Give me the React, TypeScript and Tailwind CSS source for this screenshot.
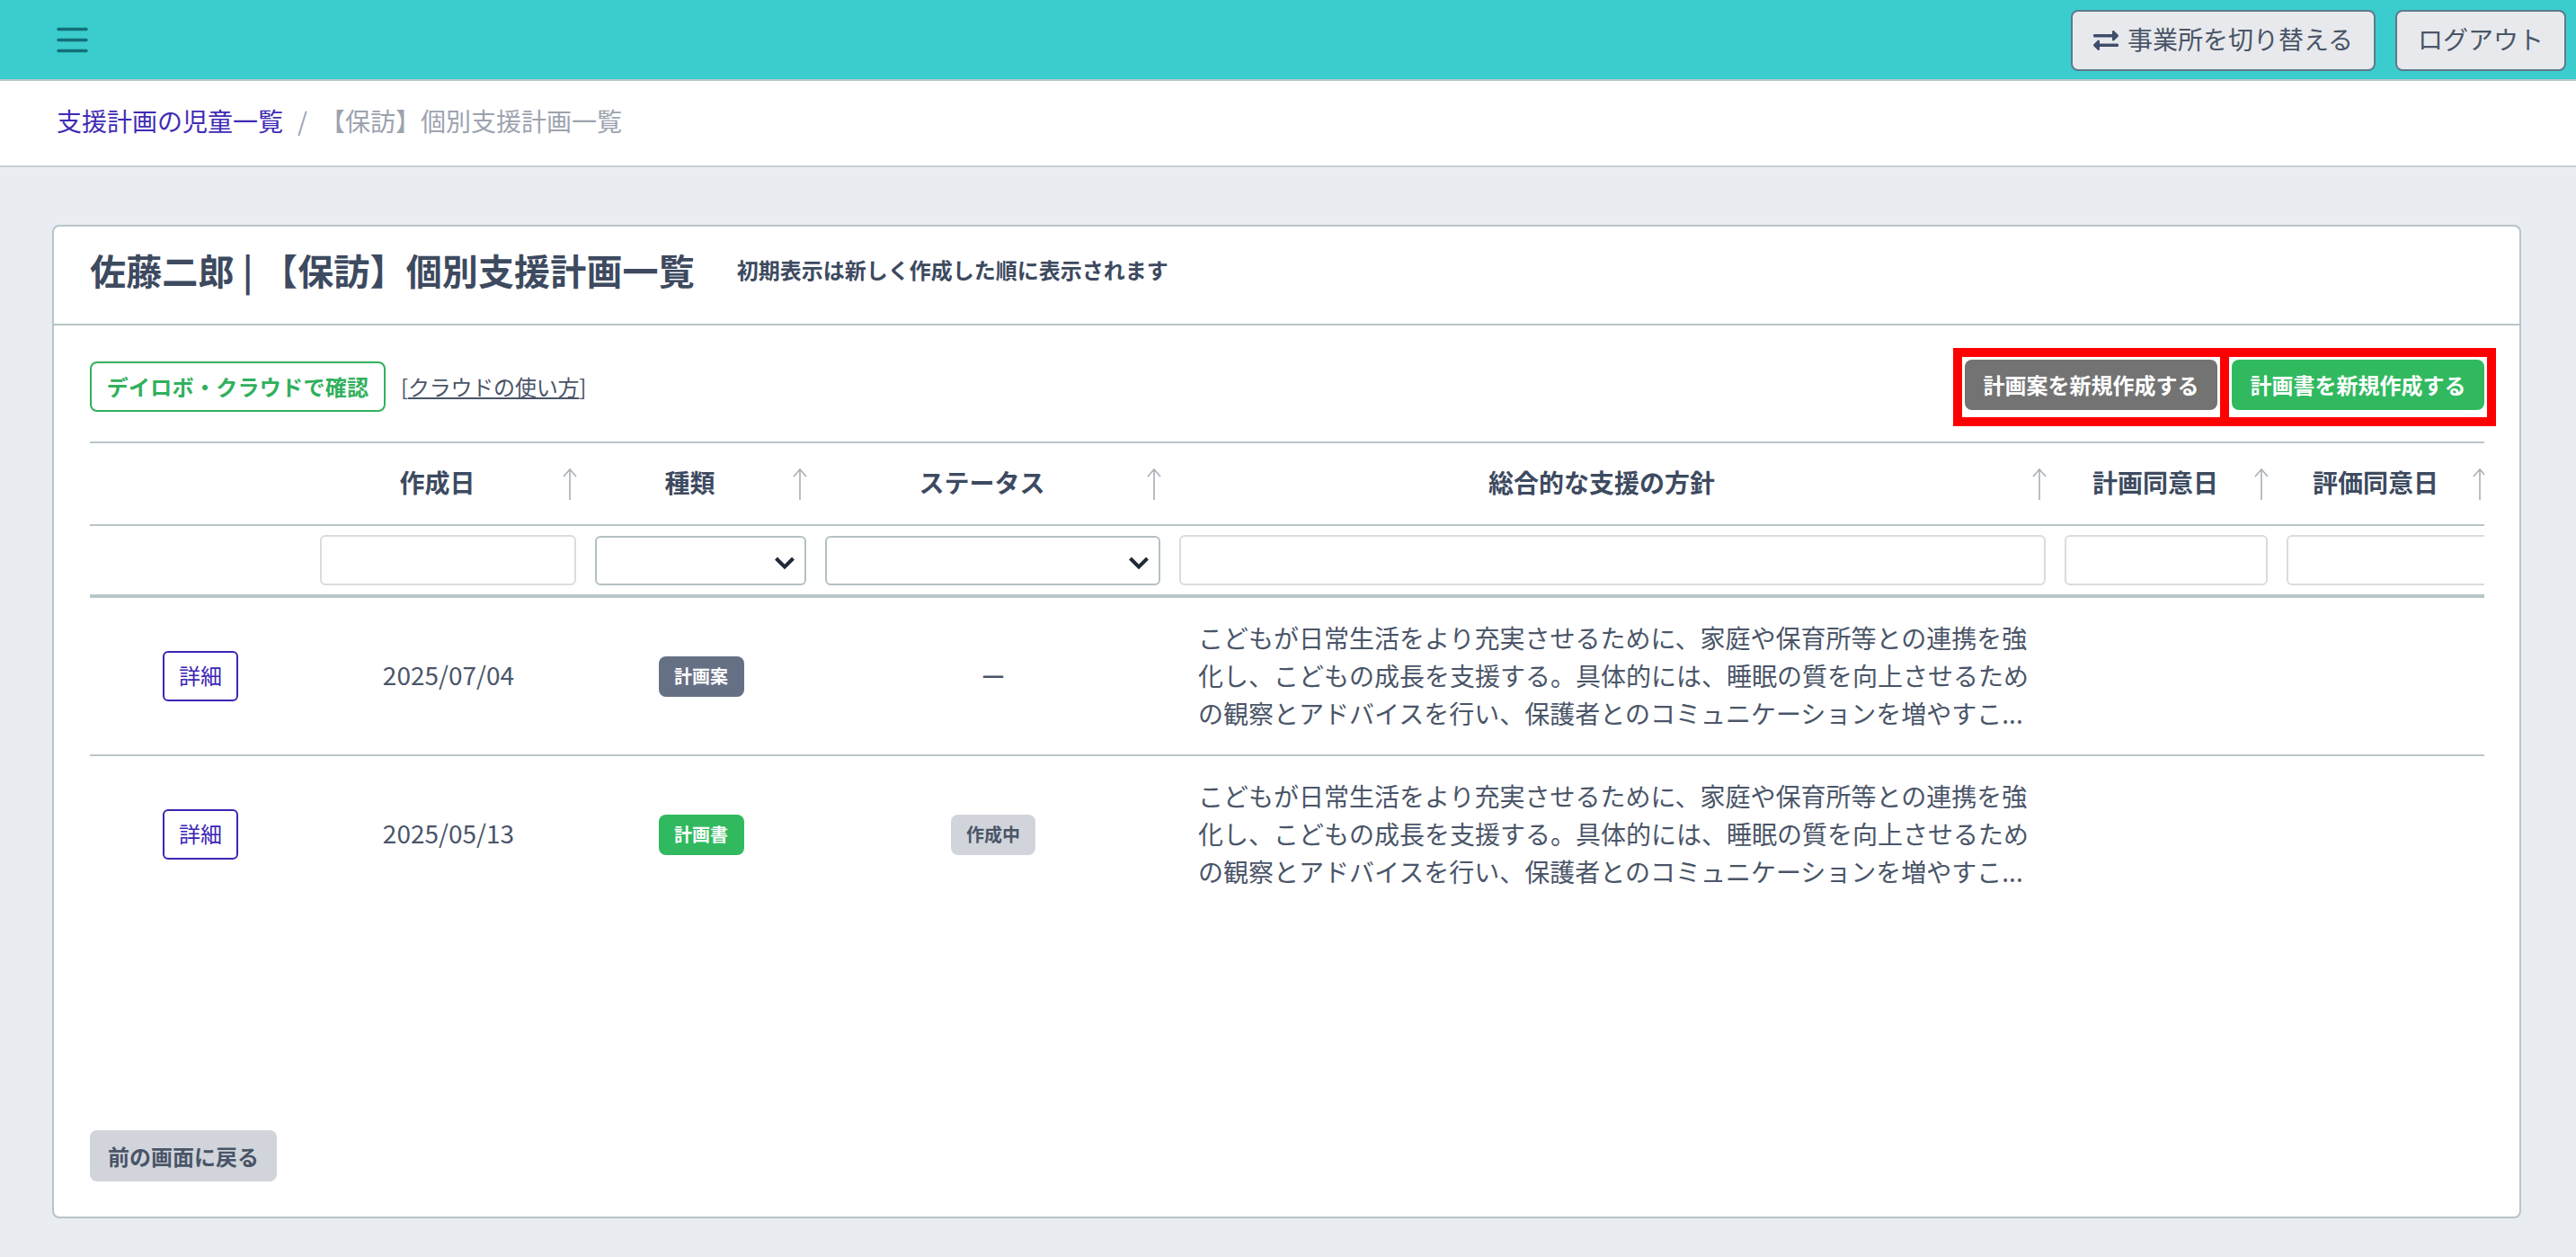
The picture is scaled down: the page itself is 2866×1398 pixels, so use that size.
import { FaExchangeAlt } from "react-icons/fa";

const FONT = "font-['Noto_Sans_CJK_JP',sans-serif]";

const SUMMARY =
  "こどもが日常生活をより充実させるために、家庭や保育所等との連携を強化し、こどもの成長を支援する。具体的には、睡眠の質を向上させるための観察とアドバイスを行い、保護者とのコミュニケーションを増やすこ...";

const HEADERS = ["作成日", "種類", "ステータス", "総合的な支援の方針", "計画同意日", "評価同意日"];

function SortArrow() {
  return (
    <svg
      className="absolute right-[9px] top-[28px]"
      width="18"
      height="35"
      viewBox="0 0 18 35"
      fill="none"
      stroke="#a9afb6"
      strokeWidth="1.6"
    >
      <path d="M9 1V35M2 9L9 1L16 9" />
    </svg>
  );
}

function SelectBox() {
  return (
    <div className="relative">
      <select className="block h-[55px] w-full appearance-none rounded-md border-2 border-[#b4c0c4] bg-white" />
      <svg
        className="pointer-events-none absolute right-[12px] top-[22px]"
        width="24"
        height="16"
        viewBox="0 0 24 16"
        fill="none"
        stroke="#1f2937"
        strokeWidth="4"
      >
        <path d="M2.5 3L12 12.5L21.5 3" />
      </svg>
    </div>
  );
}

function TextBox() {
  return <input className="block h-[56px] w-full rounded-md border-2 border-[#d9dcdf] bg-white" />;
}

function Row({
  date,
  kind,
  kindColor,
  status,
  last,
}: {
  date: string;
  kind: string;
  kindColor: string;
  status: React.ReactNode;
  last?: boolean;
}) {
  const cell = `align-middle text-center ${last ? "" : "border-b-2 border-[#b8c6c9]"}`;
  return (
    <tr>
      <td className={cell}>
        <button className="h-[56px] w-[84px] rounded-md border-2 border-[#3b25b5] pb-[2px] text-[24px] text-[#3b25b5]">
          詳細
        </button>
      </td>
      <td className={`${cell} pb-[4px] text-[28px] text-[#4a5568]`}>{date}</td>
      <td className={cell}>
        <span
          className={`inline-flex h-[45px] w-[95px] items-center justify-center rounded-lg text-[20px] font-bold text-white ${kindColor}`}
        >
          {kind}
        </span>
      </td>
      <td className={cell}>{status}</td>
      <td className={`${cell} pb-[25px] pl-[31px] pr-[29px] pt-[23px] text-left text-[28px] leading-[42px] text-[#4a5568]`}>
        {SUMMARY}
      </td>
      <td className={cell} />
      <td className={cell} />
    </tr>
  );
}

export default function App() {
  return (
    <div className={`min-h-screen bg-[#e9ecf0] ${FONT}`}>
      {/* top bar */}
      <header className="flex h-[90px] items-center justify-between border-b-2 border-[#b6c9cd] bg-[#3bcdcd] pl-[63px] pr-[11px] pt-[2px]">
        <svg width="35" height="30" viewBox="0 0 35 30" stroke="#136f78" strokeWidth="3.5" strokeLinecap="round">
          <path d="M2 2.5H33M2 14.5H33M2 26.5H33" />
        </svg>
        <div className="flex gap-[22px]">
          <button className="flex h-[68px] w-[339px] items-center justify-center gap-[10px] rounded-lg border-2 border-[#5c7a8c] bg-[#e8e9ec] pb-1 text-[28px] text-[#4a5568]">
            <FaExchangeAlt className="mt-1 text-[28px] text-[#3e4f6b]" />
            事業所を切り替える
          </button>
          <button className="h-[68px] w-[190px] rounded-lg border-2 border-[#5c7a8c] bg-[#e8e9ec] pb-1 text-[28px] text-[#4a5568]">
            ログアウト
          </button>
        </div>
      </header>

      {/* breadcrumb */}
      <nav className="flex h-[96px] items-center border-b-2 border-[#c9d0d4] bg-white pb-[6px] pl-[63px] text-[28px]">
        <a className="text-[#3f2bb5]">支援計画の児童一覧</a>
        <span className="mx-4 text-[#9ca3af]">/</span>
        <span className="-ml-[2px] text-[#9ca3af]">【保訪】個別支援計画一覧</span>
      </nav>

      <main className="pb-[43px] pl-[58px] pr-[61px] pt-16">
        <section className="flex h-[1105px] flex-col rounded-lg border-2 border-[#b8c4c8] bg-white">
          <div className="flex h-[110px] items-center gap-[47px] border-b-2 border-[#b8c4c8] pb-3 pl-10">
            <h1 className="text-[40px] font-bold tracking-[0.15px] text-[#3d4a5f]">佐藤二郎 | 【保訪】個別支援計画一覧</h1>
            <p className="text-[24px] font-bold text-[#3d4a5f]">初期表示は新しく作成した順に表示されます</p>
          </div>

          <div className="flex flex-1 flex-col pl-10 pr-[39px] pt-10">
            {/* actions */}
            <div className="flex h-[56px] items-center justify-between">
              <div className="flex items-center gap-[17px]">
                <button className="h-[56px] w-[329px] rounded-lg border-2 border-[#31b05c] text-[24px] font-bold tracking-[0.3px] text-[#31b05c]">
                  デイロボ・クラウドで確認
                </button>
                <span className="text-[24px] tracking-[-0.2px] text-[#4a5568]">
                  [<span className="underline">クラウドの使い方</span>]
                </span>
              </div>
              <div className="-mr-[13px] flex">
                <div className="border-[10px] border-[#ff0000] pb-[8px] pl-[3px] pr-[3px] pt-[3px]">
                  <button className="h-[56px] w-[281px] rounded-lg bg-[#737373] text-[24px] font-bold text-white">
                    計画案を新規作成する
                  </button>
                </div>
                <div className="border-[10px] border-l-0 border-[#ff0000] pb-[8px] pl-[3px] pr-[3px] pt-[3px]">
                  <button className="h-[56px] w-[281px] rounded-lg bg-[#31b95f] text-[24px] font-bold text-white">
                    計画書を新規作成する
                  </button>
                </div>
              </div>
            </div>

            {/* list */}
            <div className="mt-[33px] overflow-hidden">
              <table className="w-[2677px] table-fixed border-separate border-spacing-0">
                <colgroup>
                  <col className="w-[246px]" />
                  <col className="w-[306px]" />
                  <col className="w-[256px]" />
                  <col className="w-[394px]" />
                  <col className="w-[985px]" />
                  <col className="w-[247px]" />
                  <col className="w-[243px]" />
                </colgroup>
                <thead>
                  <tr>
                    <th className="h-[94px] border-y-2 border-[#b8c6c9]" />
                    {HEADERS.map((label) => (
                      <th
                        key={label}
                        className="relative h-[94px] border-y-2 border-[#b8c6c9] pb-[4px] pr-[25px] text-center text-[28px] font-bold text-[#3d4a5f]"
                      >
                        {label}
                        <SortArrow />
                      </th>
                    ))}
                  </tr>
                  <tr>
                    <td className="h-[80px] border-b-4 border-[#b8c6c9]" />
                    <td className="border-b-4 border-[#b8c6c9] pl-[10px] pr-[11px]">
                      <TextBox />
                    </td>
                    <td className="border-b-4 border-[#b8c6c9] pl-[10px] pr-[11px]">
                      <SelectBox />
                    </td>
                    <td className="border-b-4 border-[#b8c6c9] pl-[10px] pr-[11px]">
                      <SelectBox />
                    </td>
                    <td className="border-b-4 border-[#b8c6c9] pl-[10px] pr-[11px]">
                      <TextBox />
                    </td>
                    <td className="border-b-4 border-[#b8c6c9] pl-[10px] pr-[11px]">
                      <TextBox />
                    </td>
                    <td className="border-b-4 border-[#b8c6c9] pl-[10px]">
                      <TextBox />
                    </td>
                  </tr>
                </thead>
                <tbody>
                  <Row
                    date="2025/07/04"
                    kind="計画案"
                    kindColor="bg-[#667085]"
                    status={<span className="text-[28px] text-[#4a5568]">ー</span>}
                  />
                  <Row
                    date="2025/05/13"
                    kind="計画書"
                    kindColor="bg-[#31b95f]"
                    last
                    status={
                      <span className="inline-flex h-[45px] w-[94px] items-center justify-center rounded-lg bg-[#d1d5db] text-[20px] font-bold text-[#4a5568]">
                        作成中
                      </span>
                    }
                  />
                </tbody>
              </table>
            </div>

            <button className="mb-[39px] mt-auto h-[57px] w-[208px] rounded-lg bg-[#d1d5db] text-[24px] font-bold text-[#4a5568]">
              前の画面に戻る
            </button>
          </div>
        </section>
      </main>
    </div>
  );
}
